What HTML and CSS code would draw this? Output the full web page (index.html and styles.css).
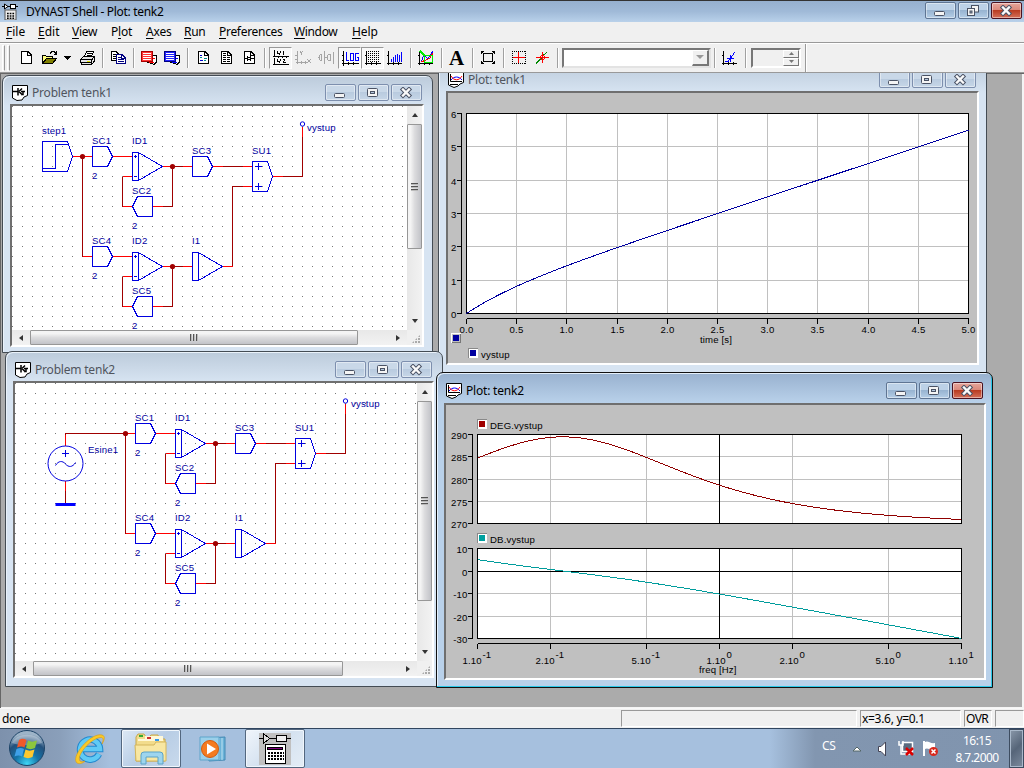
FILE: index.html
```
<!DOCTYPE html>
<html lang="en">
<head>
<meta charset="utf-8">
<title>DYNAST Shell - Plot: tenk2</title>
<link rel="stylesheet" href="styles.css">
</head>
<body>
<svg class="defs" aria-hidden="true">
  <symbol id="i-min" viewBox="0 0 14 12"><rect x="1.5" y="6.5" width="10" height="4" rx="1" fill="#f4f4f4" stroke="#4a5264"/></symbol>
  <symbol id="i-max" viewBox="0 0 14 12"><rect x="1.5" y="1.5" width="10" height="8" rx="1" fill="#f4f4f4" stroke="#4a5264"/><rect x="4.5" y="4.5" width="4" height="2" fill="#b5c8de" stroke="#4a5264"/></symbol>
  <symbol id="i-restore" viewBox="0 0 14 12"><rect x="5.5" y=".5" width="7" height="6.500" fill="#f4f4f4" stroke="#4a5264"/><rect x="1.500" y="3.500" width="7" height="7" fill="#f4f4f4" stroke="#4a5264"/><rect x="4" y="6" width="2" height="2" fill="#9ab" stroke="#4a5264"/></symbol>
  <symbol id="i-close" viewBox="0 0 14 12"><path d="M4 2.500L10 8.500M10 2.500L4 8.500" stroke="#4a5264" stroke-width="4.400" stroke-linecap="square"/><path d="M4 2.500L10 8.500M10 2.500L4 8.500" stroke="#fafafa" stroke-width="2.400" stroke-linecap="square"/></symbol>
  <symbol id="i-problem" viewBox="0 0 16 16"><path d="M.5.5H15.500V10.500L12 12L10 15L5 15.500L.5 13Z" fill="#fff" stroke="#000"/><path d="M1 6.500H6M6 3V10.500M7 6.500L10 3.500M7 6.500L10 9.500M9 9.500H11V7M9 6.500H13" stroke="#000" stroke-width="1.500" fill="none"/></symbol>
  <symbol id="i-plot" viewBox="0 0 16 16"><path d="M.5.5H15.500V10.500L12 12L10 14L6 15.500L.5 13Z" fill="#fff" stroke="#000"/><path d="M2.500 2V9.500H14M2 12.500H10" stroke="#000" fill="none"/><path d="M3 8C6 4 11 4 14 8" stroke="#00f" fill="none"/><path d="M3 4C6 9 11 9 14 4" stroke="#f00" fill="none"/></symbol>
</svg>

<header class="titlebar">
  <svg class="app-icon" width="16" height="17" viewBox="0 0 16 17"><path d="M0 3.500H16" stroke="#000"/><path d="M2.500 1L6 3.500L2.500 6Z" fill="#fff" stroke="#000"/><rect x="8.500" y="1.500" width="5" height="4" fill="#fff" stroke="#000"/><rect x="3" y="7" width="11" height="10" fill="#eee" stroke="#555"/><path d="M5 10.500H12.500M5 13H12.500M5 15.300H12.500" stroke="#000" stroke-width="1.500" stroke-dasharray="1.700 1"/></svg>
  <h1 class="title-text">DYNAST Shell - Plot: tenk2</h1>
  <div class="controls">
    <span class="ctl"><svg width="14" height="12"><use href="#i-min"/></svg></span>
    <span class="ctl"><svg width="14" height="12"><use href="#i-restore"/></svg></span>
    <span class="ctl close"><svg width="14" height="12"><use href="#i-close"/></svg></span>
  </div>
</header>

<nav class="menu">
  <span class="m-file"><u>F</u>ile</span><span class="m-edit"><u>E</u>dit</span><span class="m-view"><u>V</u>iew</span><span class="m-plot">P<u>l</u>ot</span><span class="m-axes"><u>A</u>xes</span><span class="m-run"><u>R</u>un</span><span class="m-pref"><u>P</u>references</span><span class="m-window"><u>W</u>indow</span><span class="m-help"><u>H</u>elp</span>
</nav>

<div class="toolbar">
  <i class="grip"></i><i class="grip"></i>
  <span class="tb"><svg width="16" height="16"><path d="M3.500 1.500H10L13.500 5V13.500H3.500ZM9.500 2V5.500H13" fill="#fff" stroke="#000"/></svg></span>
  <span class="tb"><svg width="16" height="16"><path d="M1.500 13.500V5.500H4.500L5.500 6.500H11.500V8.500" fill="#ffff80" stroke="#000"/><path d="M1.500 13.500L5.500 8.500H15.500L11.500 13.500Z" fill="#808000" stroke="#000"/><path d="M9 3.500L11 1.500H13L15 3.500M15.500 1V4M13 4.500H16" stroke="#000" fill="none"/></svg></span>
  <span class="tb drop"><svg width="8" height="4"><path d="M0 0H7L3.500 4Z"/></svg></span>
  <span class="tb"><svg width="17" height="16"><path d="M5.500 6.500L7.500 1.500H14.500L12.500 6.500" fill="#fff" stroke="#000"/><path d="M8 3.500H12.500M7.500 5.500H12" stroke="#000"/><path d="M1.500 9.500L4.500 6.500H15.500V11L12.500 14.500H2.500V13L1.500 12Z" fill="#e4e4e4" stroke="#000"/><path d="M2 9.500H13L15 7M2 12.500H12.500M12.500 9.500V14" stroke="#000" fill="none"/><path d="M8 11.500H11" stroke="#dd0"/></svg></span>
  <i class="sep"></i>
  <span class="tb"><svg width="16" height="16"><path d="M1.500 1.500H6L8.500 4V10.500H1.500Z" fill="#fff" stroke="#000"/><path d="M3 4.500H6M3 6.500H7M3 8.500H7" stroke="#000"/><path d="M6.500 4.500H12L15.500 8V13.500H6.500Z" fill="#fff" stroke="#000080"/><path d="M8 7.500H11M8 9.500H14M8 11.500H14M11.500 5V8.500H15" stroke="#000080" fill="none"/></svg></span>
  <i class="sep"></i>
  <span class="tb"><svg width="17" height="16"><path d="M6.500 5.500H15.500V12L13 14.500L6.500 12Z" fill="#fff" stroke="#000"/><path d="M11 8.500H14M8 12.500H13" stroke="red"/><path d="M.5 1.500H11.500V11.500H.5Z" fill="#f33" stroke="#a00"/><path d="M2 3.500H10M2 5.500H10M2 7.500H10M2 9.500H10" stroke="#fff"/></svg></span>
  <span class="tb"><svg width="17" height="16"><path d="M6.500 5.500H15.500V12L13 14.500L6.500 12Z" fill="#fff" stroke="#000"/><path d="M11 8.500H14M8 12.500H13" stroke="blue"/><path d="M.5 1.500H11.500V11.500H.5Z" fill="#22f" stroke="#000080"/><path d="M2 3.500H10M2 5.500H10M2 7.500H10M2 9.500H10" stroke="#fff"/></svg></span>
  <i class="sep"></i>
  <span class="tb"><svg width="16" height="16"><path d="M3.500 1.500H10L13.500 5V13.500H3.500ZM9.500 2V5.500H13" fill="#fff" stroke="#000"/><path d="M5 5.500H7M5 10.500H8" stroke="#00c"/><path d="M9 8.500H12M5 7.500H7M9 10.500H11" stroke="#088"/></svg></span>
  <span class="tb"><svg width="16" height="16"><path d="M3.500 1.500H10L13.500 5V13.500H3.500ZM9.500 2V5.500H13" fill="#fff" stroke="#000"/><path d="M5 3.500H8M5 5.500H8M5 7.500H12M5 9.500H12M5 11.500H12" stroke="#000" stroke-dasharray="3 1"/></svg></span>
  <span class="tb"><svg width="16" height="16"><path d="M3.500 1.500H10L13.500 5V13.500H3.500ZM9.500 2V5.500H13" fill="#fff" stroke="#000"/><path d="M4 8.500H7M6.500 6V11M9.500 6V11M10 8.500H13M7 7.500H9M7 9.500H9" stroke="#000"/></svg></span>
  <i class="sep"></i>
  <span class="tb on"><svg width="16" height="16"><path d="M1.500 0V7M0 6.500H16M1.500 8V15M0 14.500H16M5.500 6V8M9.500 6V8M13.500 6V8M4.500 1V3H7M7.500 1V3M6.500 3V5M10.500 1V5M4.500 9V11H7M7.500 9V11M6.500 11V13M10 9.500H12M11.500 10V11M10.500 11V12.500H13" stroke="#000" fill="none"/></svg></span>
  <span class="tb"><svg width="16" height="16"><path d="M2.500 1V14M1 12.500H12M0 5.500H3M0 9.500H3M6.500 11V14M10.500 11V14M5 1L6.500 3L8 1M6.500 3V5M12 9L16 13M16 9L12 13" stroke="#a5a5a5" fill="none"/></svg></span>
  <span class="tb"><svg width="16" height="16"><path d="M6.500 1V14M15.500 2V14M1.500 5V10M2 4.500H3.500V10.500H2M9.500 5V10M10 4.500H12.500V10.500H10M7 7.500H9M0 7.500H1" stroke="#a5a5a5" fill="none"/></svg></span>
  <span class="tb on"><svg width="18" height="16"><path d="M1.500 1V16M0 13.500H17M0 5.500H2M0 10.500H2M6.500 12V15M11.500 12V15" stroke="#000"/><path d="M4.500 2V10.500H7M8.500 3.500H11.500V10.500H8.500ZM17 3.500H13.500V10.500H16.500V7.500H15" stroke="#00f" fill="none"/></svg></span>
  <span class="tb on"><svg width="16" height="16"><path d="M1.500 1V15M0 13.500H16M0 5.500H2M6.500 12V15M11.500 12V15" stroke="#000"/><path d="M3 1.500H15M3 3.500H15M3 5.500H15M3 7.500H15M3 9.500H15M3 11.500H15" stroke="#000" stroke-dasharray="1 1"/></svg></span>
  <span class="tb"><svg width="16" height="16"><path d="M1.500 1V15M0 13.500H15M0 5.500H2M6.500 12V15M11.500 12V15" stroke="#000"/><path d="M4.500 12V9M6.500 12V7M8.500 12V5M10.500 12V4M12.500 12V5M14.500 12V2" stroke="#00f"/></svg></span>
  <i class="sep"></i>
  <span class="tb"><svg width="16" height="16"><path d="M1.500 1V15M0 13.500H15M0 5.500H2M6.500 12V15M11.500 12V15" stroke="#000"/><path d="M3 12L6 5L10 9L15 1" stroke="#00f" fill="none"/><path d="M3 12L8 10L12 8L15 3" stroke="#f00" fill="none"/><path d="M6.500 5.500H14.500V12.500H6.500ZM2 1L7 6" stroke="#0e0" stroke-width="1.500" fill="none"/></svg></span>
  <i class="sep"></i>
  <span class="tb"><b class="letter">A</b></span>
  <i class="sep"></i>
  <span class="tb"><svg width="16" height="16"><path d="M4.500 3.500H11.500L12.500 4.500V10.500L11.500 11.500H4.500L3.500 10.500V4.500Z" fill="none" stroke="#000"/><path d="M1.500 4V1.500H4M12 1.500H14.500V4M1.500 11V13.500H4M12 13.500H14.500V11M2 2L4 4M14 2L12 4M2 13L4 11M14 13L12 11" stroke="#000" fill="none"/></svg></span>
  <i class="sep"></i>
  <span class="tb"><svg width="16" height="16"><path d="M1 1.500H15M1 13.500H15M1.500 1V14M14.500 1V14" stroke="#000" stroke-dasharray="1 1"/><path d="M2 7.500H14M7.500 2V13" stroke="red"/></svg></span>
  <span class="tb"><svg width="16" height="16"><path d="M2 13.500L7 8.500L10 4.500L13 2.500" stroke="#080" fill="none"/><path d="M2 7.500H15M8.500 2V13" stroke="red"/><circle cx="8.500" cy="7.500" r="2" fill="none" stroke="red"/></svg></span>
  <i class="sep"></i>
  <div class="combo"><span class="combo-btn"><svg width="8" height="4"><path d="M0 0H8L4 4Z" fill="#999"/></svg></span></div>
  <i class="sep"></i>
  <span class="tb"><svg width="16" height="16"><path d="M1.500 1V15M0 13.500H15M0 5.500H2M6.500 12V15M11.500 12V15" stroke="#000"/><path d="M3 11.500H6L13 2M5 8.500H12M8.500 5V12" stroke="#00f" fill="none"/></svg></span>
  <i class="sep"></i>
  <div class="spin"><div class="spin-btns"><span><svg width="5" height="3"><path d="M0 3L2.500 0L5 3Z" fill="#777"/></svg></span><span><svg width="5" height="3"><path d="M0 0L2.500 3L5 0Z" fill="#777"/></svg></span></div></div>
  <i class="tb-end"></i>
</div>

<main class="mdi">
  <section class="win problem-1">
    <div class="win-title"><svg width="16" height="16"><use href="#i-problem"/></svg><h2>Problem tenk1</h2>
      <div class="controls"><span class="ctl"><svg width="14" height="12"><use href="#i-min"/></svg></span><span class="ctl"><svg width="14" height="12"><use href="#i-max"/></svg></span><span class="ctl"><svg width="14" height="12"><use href="#i-close"/></svg></span></div></div>
    <div class="client scrolled">
      <svg id="circuit1" class="canvas" viewBox="12 106 395 224"></svg>
      <div class="vbar"><i class="up"></i><i class="thumb"></i><i class="down"></i></div>
      <div class="hbar"><i class="left"></i><i class="thumb"></i><i class="right"></i></div>
      <div class="sizer"></div>
    </div>
  </section>

  <section class="win plot-1">
    <div class="win-title"><svg width="16" height="16"><use href="#i-plot"/></svg><h2>Plot: tenk1</h2>
      <div class="controls"><span class="ctl"><svg width="14" height="12"><use href="#i-min"/></svg></span><span class="ctl"><svg width="14" height="12"><use href="#i-max"/></svg></span><span class="ctl"><svg width="14" height="12"><use href="#i-close"/></svg></span></div></div>
    <div class="client"><svg id="plot1" class="canvas" viewBox="448 93 529 270"></svg></div>
  </section>

  <section class="win problem-2">
    <div class="win-title"><svg width="16" height="16"><use href="#i-problem"/></svg><h2>Problem tenk2</h2>
      <div class="controls"><span class="ctl"><svg width="14" height="12"><use href="#i-min"/></svg></span><span class="ctl"><svg width="14" height="12"><use href="#i-max"/></svg></span><span class="ctl"><svg width="14" height="12"><use href="#i-close"/></svg></span></div></div>
    <div class="client scrolled">
      <svg id="circuit2" class="canvas" viewBox="15 383 402 278"></svg>
      <div class="vbar"><i class="up"></i><i class="thumb"></i><i class="down"></i></div>
      <div class="hbar"><i class="left"></i><i class="thumb"></i><i class="right"></i></div>
      <div class="sizer"></div>
    </div>
  </section>

  <section class="win plot-2 active">
    <div class="win-title"><svg width="16" height="16"><use href="#i-plot"/></svg><h2>Plot: tenk2</h2>
      <div class="controls"><span class="ctl"><svg width="14" height="12"><use href="#i-min"/></svg></span><span class="ctl"><svg width="14" height="12"><use href="#i-max"/></svg></span><span class="ctl close"><svg width="14" height="12"><use href="#i-close"/></svg></span></div></div>
    <div class="client"><svg id="plot2" class="canvas" viewBox="446 405 538 273"></svg></div>
  </section>
</main>

<footer class="status">
  <span class="msg">done</span><span class="pane p-empty"></span><span class="pane p-xy">x=3.6, y=0.1</span><span class="pane p-ovr">OVR</span><span class="pane p-last"></span>
</footer>

<div class="taskbar">
  <svg class="orb" width="40" height="39" viewBox="0 0 40 39">
    <defs><radialGradient id="orb" cx=".5" cy=".95" r=".85"><stop offset="0" stop-color="#3fd6f5"/><stop offset=".4" stop-color="#1474a8"/><stop offset=".75" stop-color="#23507c"/><stop offset="1" stop-color="#9db4c8"/></radialGradient></defs>
    <circle cx="20" cy="19" r="17.500" fill="url(#orb)" stroke="#1d4468"/>
    <path d="M5 14C9 3 31 3 35 14C27 17 13 17 5 14Z" fill="#fff" opacity=".3"/>
    <path d="M12 11C15 9 17 9.500 19.500 11L17.500 18.500C15 17 13 17 10 18.500Z" fill="#f0592a"/>
    <path d="M21 11.500C24 13 26 13 30 11.500L28 19C25 20.500 22 20.500 19 19Z" fill="#8cc63e"/>
    <path d="M9.500 20C12.500 18.500 14.500 18.500 17 20L15 27.500C12.500 26 10.500 26 7.500 27.500Z" fill="#3fa0e8"/>
    <path d="M18.500 20.500C21 22 24 22 27.500 20.500L25.500 28C22.500 29.500 19.500 29.500 16.500 28Z" fill="#fdc82f"/>
  </svg>
  <svg class="ie" width="34" height="34" viewBox="0 0 34 34">
    <path d="M26 22A10 10 0 1 1 27 17H9" fill="none" stroke="#2389cf" stroke-width="6.500"/>
    <path d="M26 22A10 10 0 1 1 27 17H9" fill="none" stroke="#5fcaf5" stroke-width="4.500"/>
    <path d="M4 31C-3 25 18 0 29 3C33 4 31 9 29 12C31 7 30 5 27 5.500C17 7 3 24 7 29C8 30 10 30 12 29C9 32 6 32 4 31Z" fill="#f9c927" stroke="#d99b12" stroke-width=".6"/>
  </svg>
  <span class="task t-explorer"><svg width="34" height="32" viewBox="0 0 34 32">
    <path d="M2 28V4L4 1H10L12 4H15L17 2H24L25 6H31V28Z" fill="#f2dc8c" stroke="#c7a64a"/>
    <path d="M4 6H11V3H29V8H4Z" fill="#fff8d8"/><path d="M5 3H9" stroke="#3a3" stroke-width="2"/><path d="M13 5H17" stroke="#c33" stroke-width="2"/><path d="M21 7H25" stroke="#39e" stroke-width="2"/>
    <path d="M1 12H20L22 9H32V28H2Z" fill="#f8e7a2" stroke="#d4b65c"/>
    <path d="M7 31V22Q7 19 10 19H26Q29 19 29 22V31H24V24H12V31Z" fill="#9dd5ee" stroke="#5aa3c8"/>
  </svg></span>
  <svg class="wmp" width="30" height="30" viewBox="0 0 30 30">
    <path d="M6 4L26 3V26L10 27Z" fill="#6cb3d8" stroke="#4389b4"/><path d="M23 4V26M20 4V26" stroke="#bfe3f3"/><path d="M1 3H20V26H1Z" fill="#9bd0ea" stroke="#5ea5cb"/>
    <circle cx="11" cy="15" r="8.500" fill="#f47b20" stroke="#d35b0e"/><path d="M8 9.500L17 15L8 20.500Z" fill="#fff"/>
  </svg>
  <span class="task t-dynast"><svg width="32" height="32" viewBox="0 0 32 32" shape-rendering="crispEdges">
    <rect width="32" height="32" fill="#c0c0c0"/><path d="M0 5.500H32" stroke="#000"/><path d="M4.500 1L11 5.500L4.500 10Z" fill="#ddd" stroke="#000"/><rect x="17.500" y="2.500" width="10" height="6" fill="#eee" stroke="#000"/>
    <rect x="6.500" y="11.500" width="20" height="19" fill="#fff" stroke="#000"/><rect x="8.500" y="14.500" width="15" height="2" fill="#800080" stroke="#000"/>
    <path d="M9 20H25M9 23H25M9 26H25" stroke="#000" stroke-width="2" stroke-dasharray="2 1"/></svg></span>
  <div class="tray">
    <span class="lang">CS</span>
    <svg class="arrow" width="10" height="6"><path d="M1 5L5 1L9 5Z" fill="#fff" stroke="#566"/></svg>
    <svg class="speaker" width="10" height="16"><path d="M1.500 5.500H4L8.500 1V15L4 10.500H1.500Z" fill="#fff" stroke="#445"/></svg>
    <svg class="net" width="17" height="17"><rect x="4.500" y="2.500" width="10" height="9" fill="#5b6b80" stroke="#fff" stroke-width="1.500"/><path d="M1 1V5H5V1M3 5V14H12" fill="none" stroke="#fff" stroke-width="1.500"/><path d="M8 8L15 15M15 8L8 15" stroke="#d00" stroke-width="2.500"/></svg>
    <svg class="flag" width="17" height="17"><path d="M2 1V16" stroke="#fff" stroke-width="2"/><path d="M3 2C6 0 8 4 13 3V10C8 11 6 7 3 9Z" fill="#fff"/><circle cx="11.500" cy="11.500" r="4.500" fill="#d8281c"/><path d="M9.500 9.500L13.500 13.500M13.500 9.500L9.500 13.500" stroke="#fff" stroke-width="1.500"/></svg>
    <div class="clock"><span>16:15</span><span>8.7.2000</span></div>
    <i class="show-desktop"></i>
  </div>
</div>
<script src="script.js"></script>
</body>
</html>
```
FILE: styles.css
```
* { box-sizing: border-box; }
html, body { margin: 0; height: 100%; overflow: hidden; }
body {
  width: 1024px; height: 768px; display: flex; flex-direction: column;
  background: #f0f0f0; color: #000; cursor: default;
  font: 12px/16px "Noto Sans", "Open Sans", sans-serif;
}
i { font-style: normal; }
.defs { position: absolute; width: 0; height: 0; }

.titlebar {
  flex: none; height: 22px; display: flex; align-items: center; padding: 0 2px 0;
  border-top: 1px solid #333; background: linear-gradient(#96b0cf, #a0bad8 50%, #b9d1ea);
}
.title-text { margin: 0 0 0 10px; font-size: 12px; font-weight: 400; letter-spacing: -.32px; white-space: nowrap; }
.app-icon { margin-left: 0; }
.title-text { margin-left: 8px; }
.controls { margin-left: auto; display: flex; gap: 2px; }
.ctl {
  width: 31px; height: 17px; display: flex; align-items: center; justify-content: center;
  border: 1px solid #7d8fae; border-radius: 2px; box-shadow: inset 0 0 0 1px #ffffff70;
  background: linear-gradient(#c9d8e8 50%, #b9cbdf 50%, #c6d6e7);
}
.ctl svg { margin-right: 1px; }
.titlebar .ctl, .active .ctl { border-color: #5f7593; background: linear-gradient(#bcd1e7 50%, #98b4d1 50%, #b4cde6); }
.titlebar .close, .active .close { border-color: #4b1220; background: linear-gradient(#e6a59b 0, #d98678 50%, #b93c22 50%, #d5705a); }
.titlebar .controls { margin-top: -2px; }

.menu { flex: none; height: 20px; display: flex; padding: 2px 0 0 6px; }
.menu u { text-underline-offset: 2px; }
.m-file { width: 32px; } .m-edit { width: 34px; } .m-view { width: 39px; letter-spacing: -.3px; }
.m-plot { width: 35px; letter-spacing: -.2px; } .m-axes { width: 38px; letter-spacing: -.2px; } .m-run { width: 35px; letter-spacing: -.3px; }
.m-pref { width: 75px; letter-spacing: -.3px; } .m-window { width: 58px; letter-spacing: -.35px; } .m-help { letter-spacing: -.1px; }

.toolbar {
  flex: none; height: 31px; display: flex; align-items: center; padding-left: 2px;
  border-top: 1px solid #999; border-bottom: 1px solid #999; box-shadow: inset 0 1px #fff;
}
.grip { width: 3px; height: 26px; margin-right: 2px; border: 1px solid #fff; border-right-color: #999; }
.grip + .tb { margin-left: 3px; }
.tb { flex: none; width: 23px; height: 22px; display: flex; align-items: center; padding-left: 3px; }
.tb svg { flex: none; shape-rendering: crispEdges; }
.drop { width: 15px; }
.on { border: 1px solid; border-color: #999 #fff #fff #999; background: #f8f8f8; }
.sep { flex: none; width: 8px; height: 20px; border-left: 3px solid transparent; background: linear-gradient(90deg, #a0a0a0 1px, #fff 1px, #fff 2px, transparent 2px) no-repeat; background-clip: padding-box; }
.letter { font: bold 21px/20px "Liberation Serif", serif; }
.combo { width: 149px; height: 20px; display: flex; justify-content: flex-end; background: #fff; border: 2px solid; border-color: #777 #e3e3e3 #e3e3e3 #777; }
.combo-btn { width: 17px; height: 16px; display: flex; align-items: center; justify-content: center; background: #f0f0f0; border: 1px solid; border-color: #fff #777 #777 #fff; border-width: 1px 2px 2px 1px; }
.spin { width: 50px; height: 20px; margin-left: 1px; display: flex; justify-content: flex-end; border: 2px solid; border-color: #777 #fff #fff #777; }
.spin-btns { width: 16px; display: flex; flex-direction: column; }
.spin-btns span { height: 8px; display: flex; align-items: center; justify-content: center; border: 1px solid; border-color: #fff #777 #777 #fff; }
.tb-end { width: 2px; height: 28px; margin-left: 4px; border-left: 1px solid #999; border-right: 1px solid #fff; }

.mdi { flex: none; position: relative; height: 635px; overflow: hidden; background: #ababab; box-shadow: inset 1px 1px #666, inset -2px -1px #f4f4f4; }
.win {
  position: absolute; display: flex; flex-direction: column;
  border: 1px solid #444c54; border-radius: 7px 7px 0 0; background: linear-gradient(#bccbdb, #d7e4f2 30px);
  box-shadow: inset 1px 1px #eaf2fa;
}
.problem-1 { left: 2px; top: 2px; width: 431px; height: 278px; padding: 0 8px 5px 7px; }
.plot-1 { left: 438px; top: -11px; width: 549px; height: 311px; padding: 0 7px 7px 7px; }
.problem-2 { left: 5px; top: 278px; width: 438px; height: 336px; padding: 0 8px 8px 7px; }
.plot-2 { left: 436px; top: 299px; width: 557px; height: 316px; padding: 0 6px 7px 7px; }
.active { border-color: #111; background: linear-gradient(#98b1cf, #b9d1ea 30px); box-shadow: inset -1px -1px #29c8e8, inset 1px 1px #e3effa; }
.win-title { flex: none; height: 28px; display: flex; align-items: center; padding: 5px 2px 0 2px; color: #50555e; }
.problem-2 .win-title { height: 29px; padding-top: 6px; }
.plot-2 .win-title { height: 30px; padding-right: 3px; color: #000; }
.plot-1 .win-title { padding-right: 3px; }
.win-title h2 { margin: 0 0 0 4px; font-size: 12px; line-height: 12px; font-weight: 400; letter-spacing: -.2px; }
.client { flex: 1; min-height: 0; border: 2px solid; border-color: #6f6f6f #fff #fff #6f6f6f; background: #c0c0c0; display: flex; }
.scrolled { display: grid; grid-template: 1fr 15px / 1fr 15px; background: #f0f0f0; }
.canvas { display: block; width: 100%; height: 100%; min-width: 0; min-height: 0; overflow: hidden; font: 9.6px "Liberation Sans", Arial, sans-serif; letter-spacing: .15px; }
.scrolled .canvas { background: #fff; }
.vbar { display: flex; flex-direction: column; align-items: center; background: linear-gradient(90deg, #e8e8e8, #f2f2f2); }
.hbar { display: flex; align-items: center; background: linear-gradient(#e8e8e8, #f2f2f2); }
.thumb { border: 1px solid #979797; border-radius: 1px; background: linear-gradient(90deg, #f4f4f4 20%, #dcdcde 50%, #c2c3c8); display: flex; align-items: center; justify-content: center; }
.vbar .thumb { width: 15px; height: 125px; }
.problem-2 .vbar .thumb { height: 200px; }
.hbar .thumb { height: 15px; width: 328px; background: linear-gradient(#f4f4f4 20%, #dcdcde 50%, #c2c3c8); }
.problem-2 .hbar .thumb { width: 310px; }
.thumb::after { content: ""; width: 7px; height: 8px; background: repeating-linear-gradient(#555 0 1px, #bbb 1px 2px, transparent 2px 3px); }
.hbar .thumb::after { width: 8px; height: 7px; background: repeating-linear-gradient(90deg, #555 0 1px, #bbb 1px 2px, transparent 2px 3px); }
.up, .down { height: 18px; display: flex; align-items: center; }
.left, .right { width: 18px; display: flex; justify-content: center; }
.down, .right { margin-top: auto; }
.right { margin: 0 0 0 auto; }
.up::after, .down::after, .left::after, .right::after { content: ""; border: 3.5px solid transparent; }
.up::after { border-top: 0; border-bottom: 4px solid #333; }
.down::after { border-bottom: 0; border-top: 4px solid #333; }
.left::after { border-left: 0; border-right: 4px solid #333; }
.right::after { border-right: 0; border-left: 4px solid #333; }
.sizer { background: radial-gradient(circle at 1px 1px, #aaa 1px, transparent 1.2px) 5px 5px / 3px 3px; clip-path: polygon(90% 30%, 90% 90%, 30% 90%); }

.status { flex: none; height: 20px; display: flex; align-items: flex-end; padding: 0 0 1px 2px; gap: 3px; border-top: 1px solid #f8f8f8; }
.msg { width: 616px; padding-bottom: 0; letter-spacing: -.3px; }
.pane { height: 17px; padding-left: 1px; border: 1px solid; border-color: #999 #fff #fff #999; letter-spacing: -.3px; white-space: nowrap; line-height: 16px; }
.p-empty { width: 236px; } .p-xy { width: 101px; } .p-ovr { width: 28px; letter-spacing: -.6px; } .p-last { flex: 1; }

.taskbar {
  flex: none; height: 40px; display: flex; align-items: center; border-top: 1px solid #30455f;
  background: linear-gradient(90deg, #7d91ac, #8a9fba 60px, #a6c0de 110px, #a6c0de 770px, #8296b0 815px, #8094ae);
}
.orb { margin-left: 7px; }
.ie { margin-left: 26px; }
.task { width: 60px; height: 39px; display: flex; align-items: center; justify-content: center; border: 1px solid #53677f; border-radius: 2px; background: linear-gradient(135deg, #dce8f5, #b8cde5 50%, #c9daec); box-shadow: inset 0 0 0 1px #f0f6fc; }
.t-explorer { margin-left: 14px; }
.wmp { margin-left: 18px; }
.t-dynast { margin-left: 16px; background: linear-gradient(135deg, #f0f5fb, #d5e2f0 50%, #e4edf6); }
.t-dynast svg { margin-right: 1px; }
.tray { flex: 1; height: 39px; display: flex; align-items: center; color: #fff; }
.lang { width: 30px; margin: -5px 0 0 517px; letter-spacing: -.3px; }
.speaker { margin-left: 15px; }
.net { margin-left: 11px; }
.flag { margin-left: 7px; }
.clock { width: 62px; margin-left: 7px; display: flex; flex-direction: column; align-items: center; line-height: 17px; letter-spacing: -.55px; }
.show-desktop { width: 15px; height: 39px; margin-left: auto; border: 1px solid #3d4c60; box-shadow: inset 0 0 0 1px #a9b8ca; background: linear-gradient(135deg, #8a98aa, #566579 50%, #7c8b9e); }
```
FILE: script.js
```
const line = (d, color, extra = "") =>
  `<path d="${d}" fill="none" stroke="${color}" shape-rendering="crispEdges" ${extra}/>`;
const label = (x, y, text, extra = "") => `<text x="${x - .5}" y="${y - .5}" ${extra}>${text}</text>`;

/* Fragments shared by both schematics. */
const DARK = "#a00000", PIN = "#ff0000", PART = "#0000e0";
function gainRight(x, y) { return `M${x},${y - 10}h15l5,10l-5,10h-15z`; }
function gainLeft(x, y) { return `M${x},${y}l5,-10h15v20h-15z`; }
function integrator(x, y) { return `M${x},${y - 14}h6v28h-6zM${x + 6},${y - 14}l24,14l-24,14`; }

function network() {
  const wires = "M82,156V256M172,166H182M172,166V206H162M122,206V176M222,166H242M172,266H182M172,266V306H162M122,306V276M232,266V186H242M282,176H302V136";
  const pins = "M82,156H92M112,156H132M162,166H172M182,166H192M212,166H222M242,166H252M152,206H162M122,206H132M122,176H132M82,256H92M112,256H132M162,266H172M182,266H192M222,266H232M242,186H252M152,306H162M122,306H132M122,276H132M272,176H282M302,136V126";
  const parts = [
    gainRight(92, 156), gainRight(192, 166), gainRight(92, 256), gainLeft(132, 206), gainLeft(132, 306),
    integrator(132, 166), integrator(132, 266), integrator(192, 266),
    "M252,161h15l5,15l-5,15h-15z",
    "M133.5,156h3M135,154.5v3M133.5,176h3M133.5,256h3M135,254.5v3M133.5,276h3",
    "M254.5,166h7M258,162.5v7M254.5,186h7M258,182.5v7"
  ].join("");
  const dots = [[82, 156], [172, 166], [172, 266]]
    .map(([x, y]) => `<circle cx="${x}" cy="${y}" r="2.6" fill="${DARK}"/>`).join("");
  const names = [["SC1", 92, 144], ["ID1", 132, 144], ["SC3", 192, 154], ["SU1", 252, 154], ["2", 92, 179],
    ["SC2", 132, 194], ["2", 132, 229], ["SC4", 92, 244], ["ID2", 132, 244], ["I1", 192, 244],
    ["2", 92, 279], ["SC5", 132, 294], ["2", 132, 329]]
    .map(([t, x, y]) => label(x, y, t)).join("");
  return line(wires, DARK) + line(pins, PIN) + line(parts, PART) + dots +
    `<circle cx="302" cy="123.500" r="2.200" fill="#fff" stroke="${PART}"/><g fill="#0000a0">${names}</g>`;
}

function grid(id, x0, y0, w, h) {
  return `<defs><pattern id="${id}" x="${x0}" y="${y0}" width="10" height="10" patternUnits="userSpaceOnUse"><rect width="1" height="1" fill="#777"/></pattern></defs><rect x="${x0}" y="${y0 - 10}" width="${w}" height="${h + 20}" fill="url(#${id})"/>`;
}

document.getElementById("circuit1").innerHTML = grid("g1", 12, 106, 395, 224) +
  `<g transform="translate(.5 .5)">${line("M72,156H82", PIN)}${network()}
  ${line("M42,141H67L72,156L67,171H42ZM42,168H55V144H68", PART)}
  <g fill="#0000a0">${label(42, 134, "step1")}${label(307, 131, "vystup")}</g></g>`;

document.getElementById("circuit2").innerHTML = grid("g2", 15, 383, 402, 278) +
  `<g transform="translate(.5 .5)">${line("M65,435V433H125M65,490V503", DARK)}${line("M125,433H135M65,445V434M65,480V490", PIN)}
  <g transform="translate(43 277)">${network()}</g>
  <circle cx="65" cy="463" r="17.500" fill="none" stroke="${PART}"/>
  ${line("M61.5,453h7M65,449.5v7", PART)}<path d="M55,465C58,460 62,460 65,463.500S72,467 75,462" fill="none" stroke="${PART}"/>
  <path d="M55,504H75" stroke="#00f" stroke-width="3"/>
  <g fill="#0000a0">${label(88, 453, "Esine1")}${label(351, 407, "vystup")}</g></g>`;

/* Legend key: a bevelled edge, a white ring and the curve's colour. */
function swatch(x, y, color, raised) {
  const a = raised ? "#fff" : "#888", b = raised ? "#777" : "#fff";
  return `<g shape-rendering="crispEdges"><rect x="${x - .5}" y="${y - .5}" width="10" height="10" fill="${raised ? "#c0c0c0" : "#fff"}"/>
  <rect x="${x + 1.5}" y="${y + 1.5}" width="6" height="6" fill="${color}"/>
  <path d="M${x},${y + 9}V${y}H${x + 9}" fill="none" stroke="${a}"/><path d="M${x},${y + 9}H${x + 9}V${y}" fill="none" stroke="${b}"/></g>`;
}

function frame(x, y, w, h) {
  return `<rect x="${x}" y="${y}" width="${w}" height="${h}" fill="none" stroke="#000" shape-rendering="crispEdges"/>`;
}

function yAxis(x, ticks) {
  const first = ticks[0][0], last = ticks[ticks.length - 1][0];
  return line(`M${x},${first}V${last}` + ticks.map(([y]) => `M${x - 5},${y}h5`).join(""), "#000") +
    ticks.map(([y, t]) => label(x - 4.5, y + 5, t, 'text-anchor="end"')).join("");
}

function curve(fn, a, b, color) {
  let d = "";
  for (let x = a; x <= b; x += 2) d += (d ? "L" : "M") + x + "," + fn(x).toFixed(2);
  return line(d, color);
}

function plotTime() {
  const xs = [466, 516, 566, 617, 667, 717, 767, 817, 868, 918, 968];
  const ys = [113, 146, 180, 213, 246, 280, 313];
  const rise = px => { const t = (px - 466) / 100.4; return 313 - (t + .5 * (1 - Math.exp(-2 * t))) * 33.33; };
  return `<g transform="translate(.5 .5)"><rect x="466" y="113" width="502" height="200" fill="#fff"/>` +
    line(xs.map(x => `M${x},113V313`).join("") + ys.map(y => `M466,${y}H968`).join(""), "#c0c0c0") +
    frame(466, 113, 502, 200) + curve(rise, 466, 968, "#0000a0") +
    yAxis(461, ys.map((y, i) => [y, 6 - i])) +
    line("M466,318H968" + xs.map(x => `M${x},318v5`).join(""), "#000") +
    xs.map((x, i) => label(x + .5, 333, (i / 2).toFixed(1), 'text-anchor="middle"')).join("") +
    label(700, 343, "time [s]") + swatch(451, 333, "#0000a0", true) + swatch(468, 348, "#0000a0") +
    label(481, 358, "vystup") + "</g>";
}

function plotFreq() {
  const xs = [477, 550, 646, 719, 792, 888, 961];
  const omega = px => 2 * Math.PI * Math.pow(10, (px - 477) / 242 - 1);
  const deg = px => { const w = omega(px); return 523 - ((Math.atan(w) - Math.atan(w / 2)) * 180 / Math.PI) * 4.45; };
  const db = px => { const w = omega(px); return 570.5 - 20 * Math.log10(2 * Math.hypot(1, w) / (w * Math.hypot(2, w))) * 2.25; };
  const verticals = (a, b) => xs.map(x => `M${x},${a}V${b}`).join("");
  const marks = [["1", "-1"], ["2", "-1"], ["5", "-1"], ["1", "0"], ["2", "0"], ["5", "0"], ["1", "1"]];
  return `<g transform="translate(.5 .5)"><rect x="477" y="434" width="484" height="89" fill="#fff"/><rect x="477" y="548" width="484" height="90" fill="#fff"/>` +
    line(verticals(434, 523) + verticals(548, 638) + "M477,456H961M477,479H961M477,501H961M477,593H961M477,616H961", "#c0c0c0") +
    line("M719,434V523M719,548V638M477,571H961", "#000") +
    frame(477, 434, 484, 89) + frame(477, 548, 484, 90) +
    curve(deg, 477, 961, "#900000") + curve(db, 477, 961, "#009c9c") +
    yAxis(472, [[434, 290], [456, 285], [479, 280], [501, 275], [523, 270]]) +
    yAxis(472, [[548, 10], [571, 0], [593, -10], [616, -20], [638, -30]]) +
    line("M477,643H961" + xs.map(x => `M${x},643v5`).join(""), "#000") +
    marks.map(([m, e], i) => label(xs[i] - (e === "-1" ? 14.5 : 12.5), 664, m + ".10") +
      label(xs[i] + (e === "-1" ? 5.5 : 7.5), 658, e)).join("") +
    label(699, 673, "freq [Hz]") + swatch(477, 419, "#a00000") + label(490, 429, "DEG.vystup") +
    swatch(477, 533, "#00a0a0") + label(490, 543, "DB.vystup") + "</g>";
}

document.getElementById("plot1").innerHTML = plotTime();
document.getElementById("plot2").innerHTML = plotFreq();
```
